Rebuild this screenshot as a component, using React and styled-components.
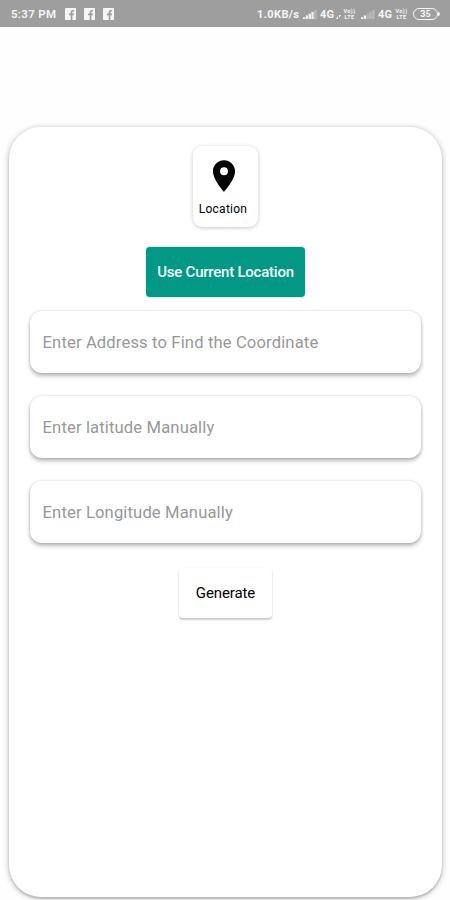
import React, { useState } from "react";
import styled, { createGlobalStyle } from "styled-components";
import { MdLocationOn } from "react-icons/md";

const GlobalStyle = createGlobalStyle`
	* {
		box-sizing: border-box;
	}

	body {
		margin: 0;
		background: #fefefe;
		font-family: Roboto, "Liberation Sans", sans-serif;
	}
`;

const Screen = styled.div`
	width: 450px;
	height: 900px;
	display: flex;
	flex-direction: column;
	overflow: hidden;
`;

// Status bar styles
const StatusBar = styled.header`
	height: 27px;
	flex-shrink: 0;
	display: flex;
	justify-content: space-between;
	align-items: center;
	padding: 1px 12px 0 11px;
	background-color: #9e9e9e;
	color: #f6f6f6;
	font-size: 11px;
	font-weight: 700;
`;

const StatusGroup = styled.div`
	display: flex;
	align-items: center;
`;

const Clock = styled.span`
	width: 54px;
	font-size: 11.5px;
	font-weight: 600;
	letter-spacing: 0.3px;
	white-space: nowrap;
`;

const Speed = styled.span`
	width: 46px;
	letter-spacing: 0.4px;
	white-space: nowrap;
`;

const Network = styled.span`
	width: ${(props) => props.$width}px;
	letter-spacing: 0.3px;
`;

const FacebookIcon = styled.svg`
	width: 11px;
	height: 12px;
	margin-right: 8px;
`;

const SignalIcon = styled.svg`
	width: 14px;
	height: 9px;
	margin-right: 3px;
`;

const DataIcon = styled.svg`
	width: 5px;
	height: 5px;
	margin: 5px 2px 0 0;
`;

const VoLte = styled.span`
	width: 13px;
	margin-right: ${(props) => props.$gap}px;
	display: flex;
	flex-direction: column;
	align-items: center;
	font-size: 5.5px;
	line-height: 6.5px;
	letter-spacing: 0.4px;
`;

const Battery = styled.span`
	position: relative;
	width: 25px;
	height: 12px;
	display: flex;
	justify-content: center;
	align-items: center;
	border: 1.5px solid #f6f6f6;
	border-radius: 6px;
	font-size: 9px;
	line-height: 9px;

	&::after {
		content: "";
		position: absolute;
		right: -3px;
		width: 2px;
		height: 4px;
		border-radius: 0 2px 2px 0;
		background: #f6f6f6;
	}
`;

// Page styles
const Panel = styled.main`
	width: 433px;
	height: 770px;
	flex-shrink: 0;
	margin: 100px 0 0 9px;
	padding-top: 19px;
	display: flex;
	flex-direction: column;
	align-items: center;
	background: #fff;
	border-radius: 32px;
	box-shadow: 0 1px 6px rgba(0, 0, 0, 0.28), 0 2px 2px rgba(0, 0, 0, 0.14);
`;

const LocationTile = styled.div`
	width: 65px;
	height: 81px;
	display: flex;
	flex-direction: column;
	align-items: center;
	padding-top: 11px;
	background: #fff;
	border-radius: 9px;
	box-shadow: 0 1px 4px rgba(0, 0, 0, 0.22);
	color: #000;
`;

const PinIcon = styled(MdLocationOn)`
	width: 38px;
	height: 38px;
	margin-right: 4px;
`;

const TileLabel = styled.span`
	margin: 7px 5px 0 0;
	font-size: 12px;
	line-height: 14px;
	letter-spacing: 0.25px;
`;

const CurrentButton = styled.button`
	width: 159px;
	height: 50px;
	margin-top: 20px;
	padding: 0;
	border: none;
	border-radius: 4px;
	background: #039785;
	box-shadow: 0 0 2px rgba(3, 151, 133, 0.5);
	color: #f4fffd;
	font-family: inherit;
	font-size: 15px;
	font-weight: 500;
	letter-spacing: -0.23px;
	white-space: nowrap;
	cursor: pointer;
`;

const Fields = styled.div`
	width: 391px;
	margin-top: 14px;
	display: flex;
	flex-direction: column;
	gap: 23px;
`;

const Field = styled.input`
	width: 100%;
	height: 62px;
	padding: 0 12.5px;
	border: none;
	border-radius: 12px;
	outline: none;
	background: #fff;
	box-shadow: 0 3px 4px rgba(0, 0, 0, 0.27), 0 0 3px rgba(0, 0, 0, 0.16);
	color: #222;
	font-family: inherit;
	font-size: 16.6px;
	letter-spacing: 0.14px;

	&::placeholder {
		color: #989898;
		opacity: 1;
	}
`;

const GenerateButton = styled.button`
	width: 93px;
	height: 50px;
	margin-top: 25px;
	padding: 0;
	border: none;
	border-radius: 4px;
	background: #fff;
	box-shadow: 0 2px 2px rgba(0, 0, 0, 0.2), 0 0 2px rgba(0, 0, 0, 0.06);
	color: #000;
	font-family: inherit;
	font-size: 15px;
	letter-spacing: -0.1px;
	cursor: pointer;
`;

const Facebook = () => (
	<FacebookIcon viewBox="0 0 11 12">
		<rect width="11" height="12" rx="0.7" fill="#f6f6f6" />
		<path d="M5.7 12V7.2H4V5.4h1.7V4.2c0-1.5.9-2.3 2.2-2.3h1.2v1.6h-.8c-.7 0-.9.3-.9.9v1h1.7l-.3 1.8H7.4V12z" fill="#9e9e9e" />
	</FacebookIcon>
);

// Bars past `level` are drawn faded
const Signal = ({ level }) => (
	<SignalIcon viewBox="0 0 14 10" preserveAspectRatio="none">
		{[2, 4, 6, 8, 10].map((h, i) => (
			<rect key={h} x={i * 2.8} y={10 - h} width="2.3" height={h} fill="#f6f6f6" opacity={i < level ? 0.9 : 0.3} />
		))}
	</SignalIcon>
);

const Volte = ({ gap }) => (
	<VoLte $gap={gap}>
		<span>Vo))</span>
		<span>LTE</span>
	</VoLte>
);

const App = () => {
	const [address, setAddress] = useState("");
	const [latitude, setLatitude] = useState("");
	const [longitude, setLongitude] = useState("");

	return (
		<>
			<GlobalStyle />
			<Screen>
				<StatusBar>
					<StatusGroup>
						<Clock>5:37 PM</Clock>
						<Facebook />
						<Facebook />
						<Facebook />
					</StatusGroup>
					<StatusGroup>
						<Speed>1.0KB/s</Speed>
						<Signal level={4} />
						<Network $width={16}>4G</Network>
						<DataIcon viewBox="0 0 5 5">
							<path d="M0 5 2 2v3zM3 1h2L3 4z" fill="#f6f6f6" />
						</DataIcon>
						<Volte gap={5} />
						<Signal level={2} />
						<Network $width={17}>4G</Network>
						<Volte gap={5} />
						<Battery>35</Battery>
					</StatusGroup>
				</StatusBar>

				<Panel>
					<LocationTile>
						<PinIcon />
						<TileLabel>Location</TileLabel>
					</LocationTile>
					<CurrentButton>Use Current Location</CurrentButton>
					<Fields>
						<Field placeholder="Enter Address to Find the Coordinate" value={address} onChange={(e) => setAddress(e.target.value)} />
						<Field placeholder="Enter latitude Manually" value={latitude} onChange={(e) => setLatitude(e.target.value)} />
						<Field placeholder="Enter Longitude Manually" value={longitude} onChange={(e) => setLongitude(e.target.value)} />
					</Fields>
					<GenerateButton>Generate</GenerateButton>
				</Panel>
			</Screen>
		</>
	);
};

export default App;
